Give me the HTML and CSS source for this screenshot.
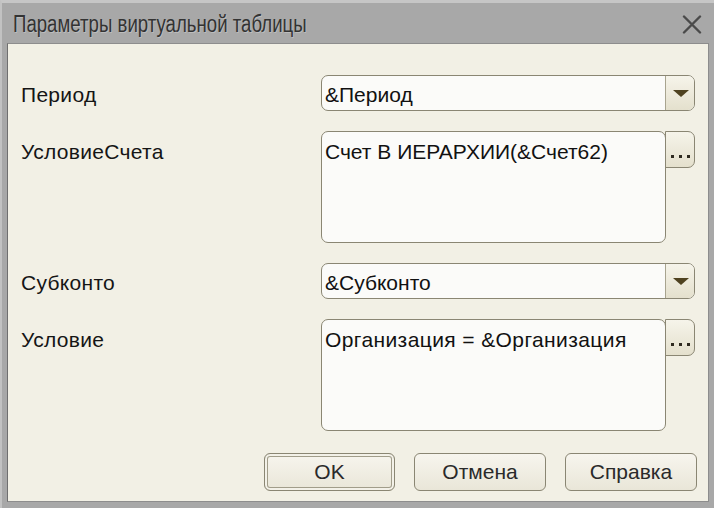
FILE: index.html
```html
<!DOCTYPE html>
<html lang="ru">
<head>
<meta charset="utf-8">
<title>Параметры виртуальной таблицы</title>
<link rel="stylesheet" href="styles.css">
</head>
<body>
<div class="window">
  <div class="titlebar">
    <span class="title">Параметры виртуальной таблицы</span>
    <svg class="close" width="20" height="19" viewBox="0 0 20 19"><path d="M2 1.5 L18 17.5 M18 1.5 L2 17.5" stroke="#4a4a4a" stroke-width="2.4" stroke-linecap="round" fill="none"/></svg>
  </div>
  <div class="content">
    <div class="form">
      <div class="label">Период</div>
      <div class="combo">
        <span class="value">&amp;Период</span>
        <span class="dd"><svg width="16" height="7" viewBox="0 0 16 7"><path d="M0 0 H16 L8 7 Z" fill="#4f4220"/></svg></span>
      </div>

      <div class="label label-memo">УсловиеСчета</div>
      <div class="memo-row">
        <div class="memo">Счет В ИЕРАРХИИ(&amp;Счет62)</div>
        <span class="choice"><i></i><i></i><i></i></span>
      </div>

      <div class="label">Субконто</div>
      <div class="combo">
        <span class="value">&amp;Субконто</span>
        <span class="dd"><svg width="16" height="7" viewBox="0 0 16 7"><path d="M0 0 H16 L8 7 Z" fill="#4f4220"/></svg></span>
      </div>

      <div class="label label-memo">Условие</div>
      <div class="memo-row">
        <div class="memo memo-wide">Организация = &amp;Организация</div>
        <span class="choice"><i></i><i></i><i></i></span>
      </div>
    </div>
    <div class="buttons">
      <button class="btn btn-default">OK</button>
      <button class="btn">Отмена</button>
      <button class="btn">Справка</button>
    </div>
  </div>
</div>
</body>
</html>
```

FILE: styles.css
```css
* { box-sizing: border-box; }
html, body { margin: 0; padding: 0; }
body {
  width: 714px;
  height: 508px;
  overflow: hidden;
  background: #a9a9a9;
  font-family: "Liberation Sans", Arial, sans-serif;
}
.window {
  width: 714px;
  height: 508px;
  background: #a8a8a8;
  border-top: 3px solid #c6c6c6;
  border-left: 2px solid #c2c2c2;
  padding: 0 5px 6px 5px;
  display: flex;
  flex-direction: column;
}
.titlebar {
  height: 40px;
  display: flex;
  align-items: center;
  justify-content: space-between;
  padding: 0 7px 0 6px;
}
.title {
  font-size: 23px;
  color: #333333;
  text-shadow: 1px 1px 0 rgba(255,255,255,0.25);
  transform: scaleX(0.81);
  transform-origin: left center;
  white-space: nowrap;
  margin-top: 2px;
}
.close { margin-top: 2px; }
.content {
  flex: 1;
  background: #f2f0e5;
  border-top: 1px solid #8d8d8d;
  border-left: 1px solid #6f6f6f;
  border-right: 1px solid #8d8d8d;
  border-bottom: 1px solid #8d8d8d;
  padding: 31px 11px 0 13px;
  display: flex;
  flex-direction: column;
}
.form {
  display: grid;
  grid-template-columns: 300px 374px;
  grid-template-rows: 36px 112px 36px 112px;
  row-gap: 20px;
}
.label {
  font-size: 21px;
  line-height: 24px;
  letter-spacing: 0.3px;
  color: #151515;
  padding-top: 8px;
}
.label-memo { padding-top: 9px; }
.combo {
  display: flex;
  border: 1px solid #8a8673;
  border-radius: 7px;
  background: #fbfbf9;
  overflow: hidden;
}
.value, .memo {
  font-size: 21px;
  line-height: 24px;
  color: #111;
}
.value {
  flex: 1;
  padding: 7px 3px;
}
.dd {
  width: 29px;
  border-left: 1px solid #a8a48f;
  background: linear-gradient(#f6f4ea, #e4e0cd);
  display: flex;
  align-items: center;
  justify-content: center;
  padding-left: 1px;
}
.memo-row {
  display: flex;
  align-items: flex-start;
}
.memo {
  width: 345px;
  height: 112px;
  border: 1px solid #8a8673;
  border-radius: 7px;
  background: #fbfbf9;
  padding: 8px 3px;
}
.memo-wide { letter-spacing: 0.4px; }
.choice {
  width: 30px;
  height: 37px;
  margin-left: -1px;
  border: 1px solid #8a8673;
  border-radius: 0 7px 7px 0;
  background: linear-gradient(#f6f4ea, #e4e0cd);
  display: flex;
  align-items: flex-end;
  justify-content: center;
  gap: 5px;
  padding-bottom: 9px;
}
.choice i {
  display: block;
  width: 3px;
  height: 3px;
  background: #2e2a20;
}
.buttons {
  display: flex;
  justify-content: flex-end;
  gap: 19px;
  margin-top: 22px;
}
.btn {
  width: 132px;
  height: 38px;
  border: 1px solid #8a8673;
  border-radius: 6px;
  background: linear-gradient(#f7f5ee, #e9e6d8);
  font-family: "Liberation Sans", Arial, sans-serif;
  font-size: 21px;
  color: #2a2a2a;
  padding: 0;
}
.btn-default {
  width: 131px;
  box-shadow: inset 0 0 0 2px #f3f1e8, inset 0 0 0 3px #a19d8a;
}
```
